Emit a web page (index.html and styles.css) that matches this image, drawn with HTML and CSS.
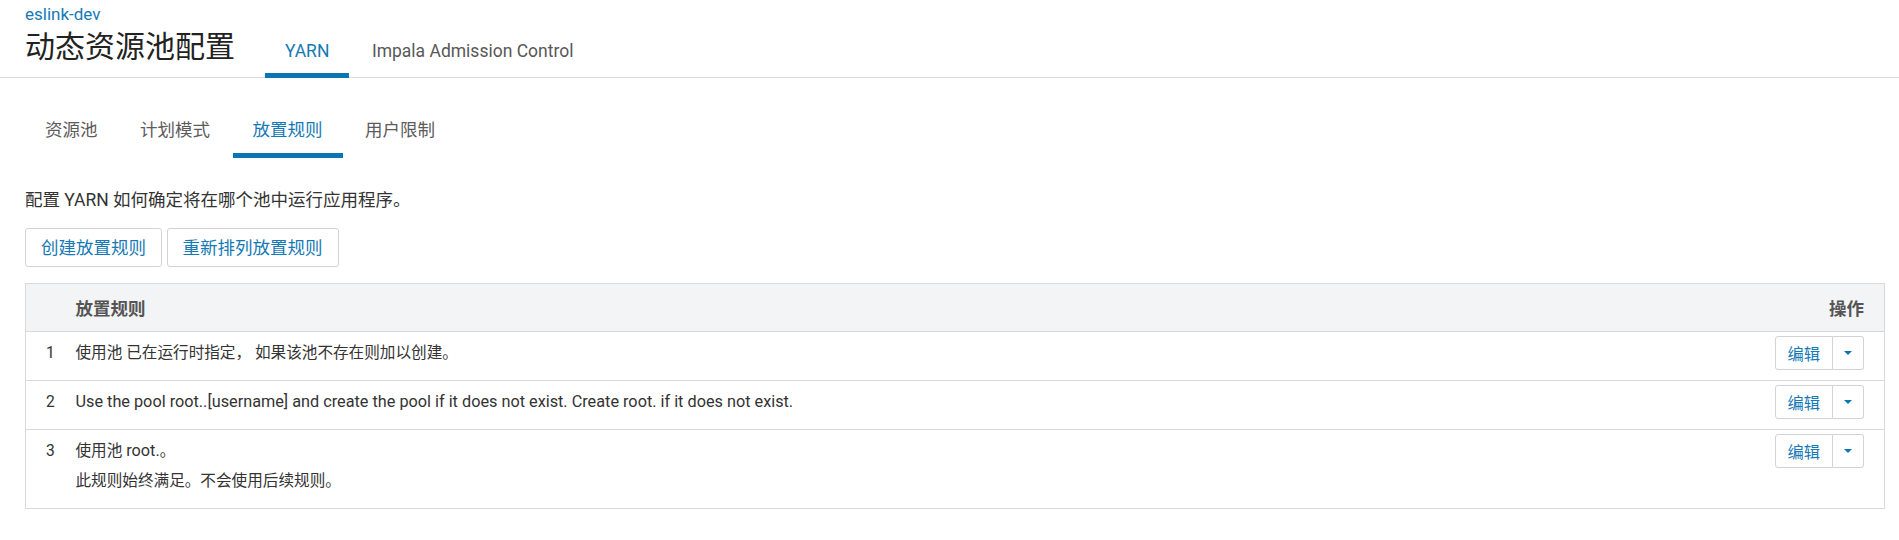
FILE: index.html
```html
<!DOCTYPE html>
<html lang="zh-CN">
<head>
<meta charset="utf-8">
<title>动态资源池配置</title>
<link rel="stylesheet" href="styles.css">
</head>
<body>
<header class="page-header">
  <div class="cluster">eslink-dev</div>
  <div class="title-row">
    <h1 class="title">动态资源池配置</h1>
    <nav class="top-tabs">
      <a class="top-tab active">YARN</a>
      <a class="top-tab">Impala Admission Control</a>
    </nav>
  </div>
</header>
<main class="content">
  <nav class="sub-tabs">
    <a class="sub-tab">资源池</a>
    <a class="sub-tab">计划模式</a>
    <a class="sub-tab active">放置规则</a>
    <a class="sub-tab">用户限制</a>
  </nav>
  <p class="desc">配置 YARN 如何确定将在哪个池中运行应用程序。</p>
  <div class="actions">
    <button class="btn">创建放置规则</button>
    <button class="btn">重新排列放置规则</button>
  </div>
  <table class="rules">
    <thead>
      <tr>
        <th class="col-num"></th>
        <th class="col-rule">放置规则</th>
        <th class="col-ops">操作</th>
      </tr>
    </thead>
    <tbody>
      <tr>
        <td class="num">1</td>
        <td class="rule">使用池 已在运行时指定， 如果该池不存在则加以创建。</td>
        <td class="ops"><span class="split"><button class="btn-edit">编辑</button><button class="btn-caret"><span class="caret"></span></button></span></td>
      </tr>
      <tr>
        <td class="num">2</td>
        <td class="rule latin">Use the pool root..[username] and create the pool if it does not exist. Create root. if it does not exist.</td>
        <td class="ops"><span class="split"><button class="btn-edit">编辑</button><button class="btn-caret"><span class="caret"></span></button></span></td>
      </tr>
      <tr>
        <td class="num">3</td>
        <td class="rule">使用池 <span class="latin">root.</span>。<div class="note">此规则始终满足。不会使用后续规则。</div></td>
        <td class="ops"><span class="split"><button class="btn-edit">编辑</button><button class="btn-caret"><span class="caret"></span></button></span></td>
      </tr>
    </tbody>
  </table>
</main>
</body>
</html>
```

FILE: styles.css
```css
* { box-sizing: border-box; }

body {
  margin: 0;
  background: #fff;
  color: #333;
  font-family: Roboto, "Noto Sans CJK SC", sans-serif;
}

.page-header {
  padding: 0 25px;
  border-bottom: 1px solid #dcdcdc;
}

.cluster {
  padding-top: 4px;
  font-size: 17px;
  line-height: 20px;
  color: #1579b6;
}

.title-row {
  display: flex;
  align-items: flex-end;
  height: 53px;
}

.title {
  margin: 0;
  padding-bottom: 10.5px;
  font-size: 30px;
  line-height: 40px;
  font-weight: 400;
  color: #222;
}

.top-tabs {
  display: flex;
  margin-left: 30px;
}

.top-tab {
  display: block;
  padding: 0 20px 10px;
  margin-right: 2.5px;
  margin-bottom: -1px;
  font-size: 17.5px;
  line-height: 24px;
  color: #585858;
  border-bottom: 5px solid transparent;
}

.top-tab.active {
  color: #1579b6;
  border-bottom-color: #0a76b1;
}

.content {
  padding: 0 14px 0 25px;
}

.sub-tabs {
  display: flex;
  margin-top: 38.5px;
  font-family: "Noto Sans CJK SC", sans-serif;
}

.sub-tab {
  display: block;
  padding: 0 20px 12px;
  margin-right: 2.5px;
  font-size: 17.5px;
  line-height: 24px;
  color: #5b5b5b;
  border-bottom: 5px solid transparent;
}

.sub-tab.active {
  color: #1579b6;
  border-bottom-color: #0a76b1;
}

.desc {
  margin: 30px 0 0;
  font-size: 17.5px;
  line-height: 24px;
  color: #333;
}

.actions {
  display: flex;
  gap: 4.5px;
  margin-top: 16px;
}

.btn {
  font-family: "Noto Sans CJK SC", sans-serif;
  font-size: 17.5px;
  font-weight: 400;
  line-height: 24px;
  padding: 6.5px 15px;
  color: #1579b6;
  background: #fff;
  border: 1px solid #d3d3d3;
  border-radius: 3px;
}

.rules {
  width: 100%;
  margin-top: 16px;
  border-collapse: collapse;
  border: 1px solid #d9d9d9;
}

.rules th {
  height: 48px;
  padding: 0 12px;
  background: #f3f4f6;
  font-size: 17.5px;
  font-weight: 700;
  color: #555;
  text-align: left;
  border-bottom: 1px solid #d9d9d9;
}

.rules th.col-num { width: 38px; padding: 0; }
.rules th.col-ops { text-align: right; padding-right: 20px; }

.rules td {
  vertical-align: top;
  border-bottom: 1px solid #d9d9d9;
  font-size: 15.625px;
  line-height: 26px;
  color: #333;
}

.rules td.num {
  padding: 8px 0 14px 20px;
}

.rules td.rule {
  padding: 8px 12px 14px;
}

.rules .latin {
  font-size: 16.25px;
}

.rules .note {
  margin-top: 4px;
}

.rules td.ops {
  padding: 4px 20px 0 12px;
  text-align: right;
}

.split {
  display: inline-flex;
}

.btn-edit {
  height: 34px;
  padding: 0 12px;
  font-family: "Noto Sans CJK SC", sans-serif;
  font-size: 16.25px;
  font-weight: 400;
  line-height: 32px;
  color: #1579b6;
  background: #fff;
  border: 1px solid #d3d3d3;
  border-radius: 3px 0 0 3px;
}

.btn-caret {
  display: flex;
  align-items: center;
  justify-content: center;
  width: 31px;
  height: 34px;
  padding: 0;
  background: #fff;
  border: 1px solid #d3d3d3;
  border-left: 0;
  border-radius: 0 3px 3px 0;
}

.caret {
  width: 0;
  height: 0;
  border-left: 4px solid transparent;
  border-right: 4px solid transparent;
  border-top: 4px solid #0a76b1;
}
```
